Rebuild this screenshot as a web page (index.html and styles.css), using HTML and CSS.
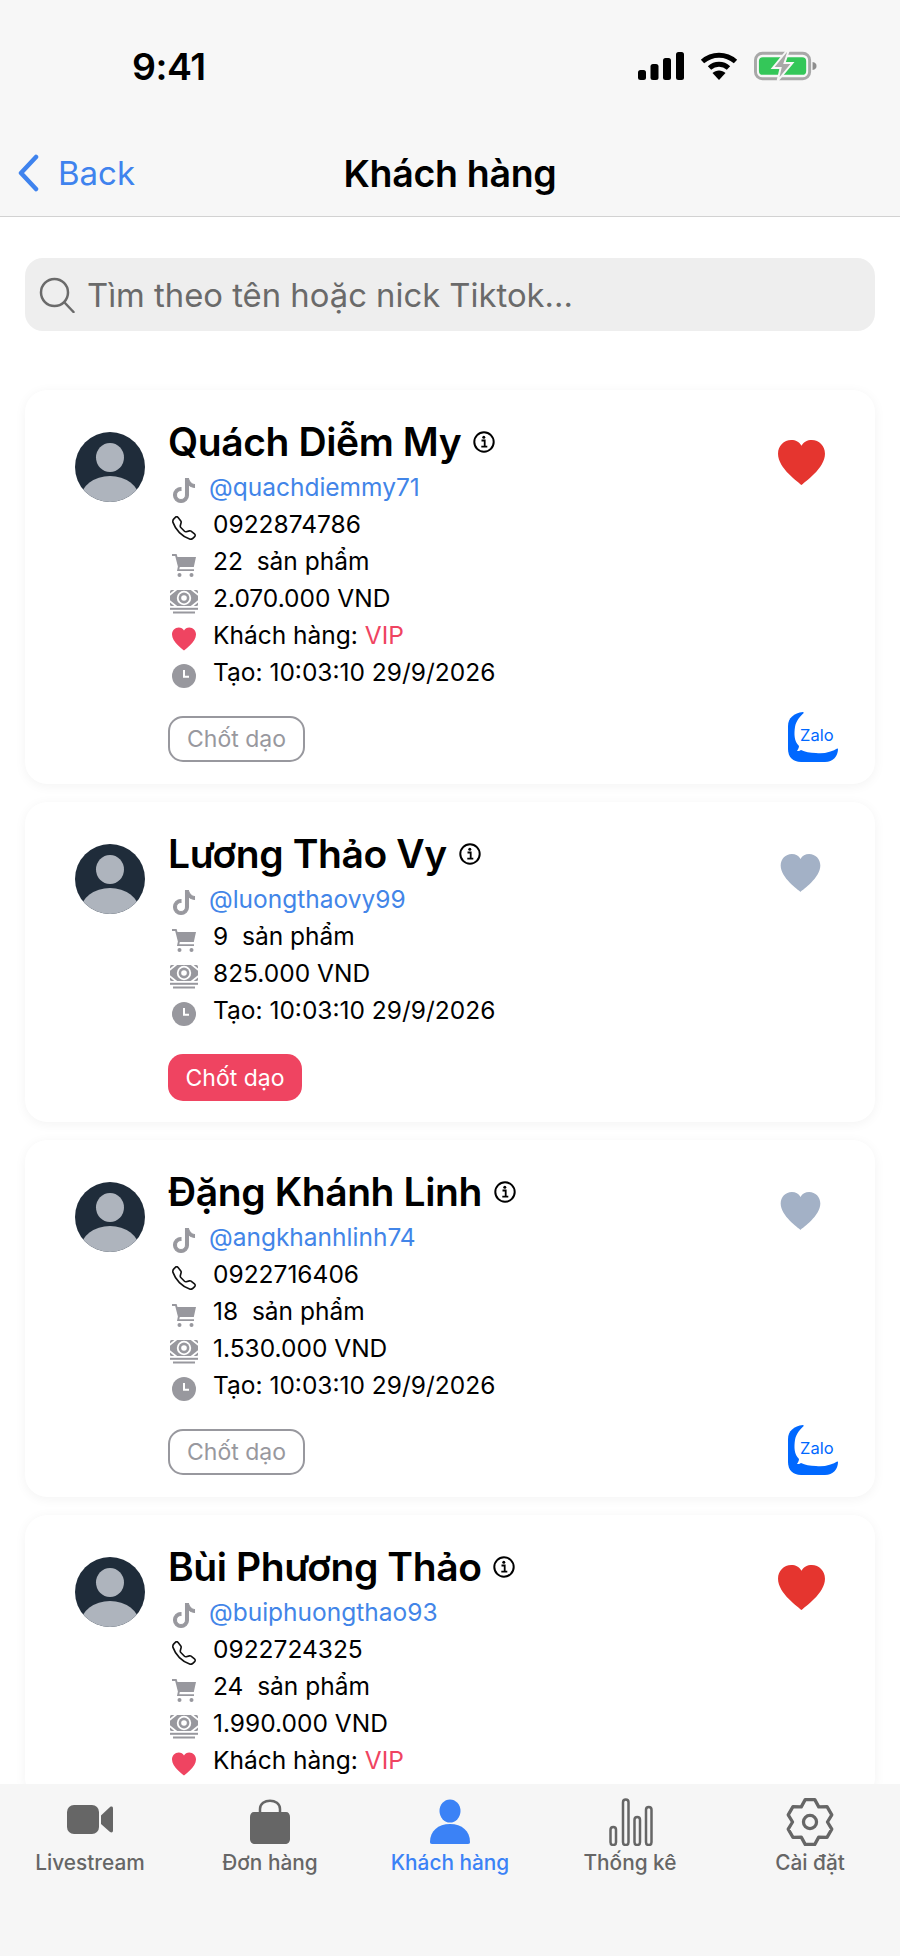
FILE: index.html
```html
<!DOCTYPE html>
<html lang="vi">
<head>
<meta charset="utf-8">
<title>Khách hàng</title>
<link rel="stylesheet" href="styles.css">
</head>
<body>
<svg class="defs" width="0" height="0" aria-hidden="true">
  <symbol id="i-tiktok" viewBox="0 0 16 16"><path fill="currentColor" stroke="currentColor" stroke-width="0.7" d="M9 0h1.980c.144.715.54 1.617 1.235 2.512C12.895 3.389 13.797 4 15 4v2c-1.753 0-3.070-.814-4-1.829V11a5 5 0 1 1-5-5v2a3 3 0 1 0 3 3V0Z"/></symbol>
  <symbol id="i-phone" viewBox="0 0 16 16"><path fill="currentColor" d="M3.654 1.328a.678.678 0 0 0-1.015-.063L1.605 2.3c-.483.484-.661 1.169-.45 1.77a17.568 17.568 0 0 0 4.168 6.608 17.569 17.569 0 0 0 6.608 4.168c.601.211 1.286.033 1.77-.45l1.034-1.034a.678.678 0 0 0-.063-1.015l-2.307-1.794a.678.678 0 0 0-.58-.122l-2.19.547a1.745 1.745 0 0 1-1.657-.459L5.482 8.062a1.745 1.745 0 0 1-.46-1.657l.548-2.19a.678.678 0 0 0-.122-.58L3.654 1.328zM1.884.511a1.745 1.745 0 0 1 2.612.163L6.29 2.98c.329.423.445.974.315 1.494l-.547 2.19a.678.678 0 0 0 .178.643l2.457 2.457a.678.678 0 0 0 .644.178l2.189-.547a1.745 1.745 0 0 1 1.494.315l2.306 1.794c.829.645.905 1.87.163 2.611l-1.034 1.034c-.74.74-1.846 1.065-2.877.702a18.634 18.634 0 0 1-7.010-4.420 18.634 18.634 0 0 1-4.420-7.009c-.362-1.030-.037-2.137.703-2.877L1.885.511z"/></symbol>
  <symbol id="i-cart" viewBox="0 0 24 24"><path fill="currentColor" d="M0 1h4.600l.9 3H24l-2.200 10H7.800l-.5 2.200H22V18H5l.9-4.600L3.200 3H0z"/><rect fill="currentColor" x="5.500" y="20" width="4" height="4" rx="2"/><rect fill="currentColor" x="17.500" y="20" width="4" height="4" rx="2"/></symbol>
  <symbol id="i-money" viewBox="0 0 28 24"><rect y="0" width="28" height="16" rx="1.500" fill="currentColor"/><path d="M-1 5.500 7 -1M-1 10.500 7 17M29 5.500 21 -1M29 10.500 21 17" fill="none" stroke="#fff" stroke-width="1.800"/><circle cx="14" cy="8" r="7.200" fill="#fff"/><circle cx="14" cy="8" r="5.400" fill="currentColor"/><circle cx="14" cy="8" r="2.800" fill="#fff"/><rect x="0" y="17.800" width="28" height="2" fill="currentColor"/><rect x="3" y="21.500" width="22" height="2" fill="currentColor"/></symbol>
  <symbol id="i-heart" viewBox="0 0 48 46"><path fill="currentColor" d="M24 46C21 43 0 29 0 14 0 6 6 0 13.500 0 18 0 22 2 24 6 26 2 30 0 34.500 0 42 0 48 6 48 14 48 29 27 43 24 46Z"/></symbol>
  <symbol id="i-clock" viewBox="0 0 24 24"><circle cx="12" cy="12" r="12" fill="currentColor"/><path d="M12 6v6.800h5" fill="none" stroke="#fff" stroke-width="2"/></symbol>
  <symbol id="i-info" viewBox="0 0 22 22"><circle cx="11" cy="11" r="9.700" fill="none" stroke="currentColor" stroke-width="2"/><circle cx="10.800" cy="6.300" r="1.500" fill="currentColor"/><path d="M8.500 9.500h3.200v6M8.300 15.700h6" fill="none" stroke="currentColor" stroke-width="1.800"/></symbol>
  <symbol id="i-avatar" viewBox="0 0 70 70"><clipPath id="av"><circle cx="35" cy="35" r="35"/></clipPath><g clip-path="url(#av)"><rect width="70" height="70" fill="#1f2c3a"/><ellipse cx="35" cy="25.500" rx="14" ry="14.500" fill="#aeb4bd"/><ellipse cx="35" cy="66" rx="29" ry="22" fill="#aeb4bd"/></g></symbol>
  <symbol id="i-zalo" viewBox="0 0 50 50"><path fill="#0068ff" d="M15 0C6 1 0 6 0 14V37C0 45 5 50 13 50H37C45 50 50 44 50 37Z"/><path fill="#fff" d="M17 0H50V36C44 40 36 42 28 41 22 41 17 40 13 38 12 39 10 39 9 39 10 37 11 36 11 34 6 29 6 22 7 15 8 9 12 4 17 0Z"/></symbol>
</svg>

<header class="top">
  <div class="status">
    <span class="time">9:41</span>
    <div class="status-icons">
      <svg class="sig" viewBox="0 0 46 28"><rect x="0" y="18" width="8" height="10" rx="2.500"/><rect x="12.500" y="12" width="8" height="16" rx="2.500"/><rect x="25" y="6" width="8" height="22" rx="2.500"/><rect x="38" y="0" width="8" height="28" rx="2.500"/></svg>
      <svg class="wifi" viewBox="0 0 38 28"><path d="M2.500 9.500C12 1 26 1 35.500 9.500" fill="none" stroke="#000" stroke-width="5"/><path d="M9.500 16C15 11 23 11 28.500 16" fill="none" stroke="#000" stroke-width="5"/><path d="M12.500 21C16 17.500 22 17.500 25.500 21L19 28Z"/></svg>
      <svg class="batt" viewBox="0 0 64 30"><rect x="1.500" y="2" width="55" height="26" rx="7" fill="none" stroke="#a8a8a8" stroke-width="3"/><rect x="5" y="6" width="48" height="18" rx="4" fill="#34c759"/><path d="M59.500 11c3 .5 4 2 4 4s-1 3.500-4 4z" fill="#8e8e8e"/><path d="M33 0 19 17h8l-3 13 15-18h-8l4-12z" fill="#a8a8a8" stroke="#f7f7f7" stroke-width="2"/></svg>
    </div>
  </div>
  <nav class="nav">
    <div class="back">
      <svg class="chev" viewBox="0 0 22 38"><path d="M19 3 4 19l15 16" fill="none" stroke="currentColor" stroke-width="4.500" stroke-linecap="round" stroke-linejoin="round"/></svg>
      <span>Back</span>
    </div>
    <h1 class="title">Khách hàng</h1>
    <div></div>
  </nav>
</header>

<main class="main">
  <div class="search">
    <svg class="search-ic" viewBox="0 0 36 36"><circle cx="15.500" cy="15.500" r="13.500" fill="none" stroke="currentColor" stroke-width="2.500"/><path d="m25.500 25.500 9 9.500" fill="none" stroke="currentColor" stroke-width="2.500" stroke-linecap="round"/></svg>
    <span>Tìm theo tên hoặc nick Tiktok...</span>
  </div>

  <section class="list">
    <article class="card">
      <svg class="avatar"><use href="#i-avatar"/></svg>
      <div class="info">
        <div class="name-line"><h2 class="name">Quách Diễm My</h2><svg class="info-ic"><use href="#i-info"/></svg></div>
        <div class="row"><svg class="ic tiktok"><use href="#i-tiktok"/></svg><span class="handle">@quachdiemmy71</span></div>
        <div class="row"><svg class="ic phone"><use href="#i-phone"/></svg><span>0922874786</span></div>
        <div class="row"><svg class="ic grey"><use href="#i-cart"/></svg><span>22&nbsp; sản phẩm</span></div>
        <div class="row"><svg class="ic grey money"><use href="#i-money"/></svg><span>2.070.000 VND</span></div>
        <div class="row"><svg class="ic pink"><use href="#i-heart"/></svg><span>Khách hàng: <b class="vip">VIP</b></span></div>
        <div class="row"><svg class="ic grey"><use href="#i-clock"/></svg><span>Tạo: 10:03:10 29/9/2026</span></div>
        <div class="btn">Chốt dạo</div>
      </div>
      <div class="side"><svg class="fav red"><use href="#i-heart"/></svg><div class="zalo"><svg class="zalo-ic"><use href="#i-zalo"/></svg><span class="zalo-text">Zalo</span></div></div>
    </article>

    <article class="card">
      <svg class="avatar"><use href="#i-avatar"/></svg>
      <div class="info">
        <div class="name-line"><h2 class="name">Lương Thảo Vy</h2><svg class="info-ic"><use href="#i-info"/></svg></div>
        <div class="row"><svg class="ic tiktok"><use href="#i-tiktok"/></svg><span class="handle">@luongthaovy99</span></div>
        <div class="row"><svg class="ic grey"><use href="#i-cart"/></svg><span>9&nbsp; sản phẩm</span></div>
        <div class="row"><svg class="ic grey money"><use href="#i-money"/></svg><span>825.000 VND</span></div>
        <div class="row"><svg class="ic grey"><use href="#i-clock"/></svg><span>Tạo: 10:03:10 29/9/2026</span></div>
        <div class="btn on">Chốt dạo</div>
      </div>
      <div class="side"><svg class="fav slate"><use href="#i-heart"/></svg></div>
    </article>

    <article class="card">
      <svg class="avatar"><use href="#i-avatar"/></svg>
      <div class="info">
        <div class="name-line"><h2 class="name">Đặng Khánh Linh</h2><svg class="info-ic"><use href="#i-info"/></svg></div>
        <div class="row"><svg class="ic tiktok"><use href="#i-tiktok"/></svg><span class="handle">@angkhanhlinh74</span></div>
        <div class="row"><svg class="ic phone"><use href="#i-phone"/></svg><span>0922716406</span></div>
        <div class="row"><svg class="ic grey"><use href="#i-cart"/></svg><span>18&nbsp; sản phẩm</span></div>
        <div class="row"><svg class="ic grey money"><use href="#i-money"/></svg><span>1.530.000 VND</span></div>
        <div class="row"><svg class="ic grey"><use href="#i-clock"/></svg><span>Tạo: 10:03:10 29/9/2026</span></div>
        <div class="btn">Chốt dạo</div>
      </div>
      <div class="side"><svg class="fav slate"><use href="#i-heart"/></svg><div class="zalo"><svg class="zalo-ic"><use href="#i-zalo"/></svg><span class="zalo-text">Zalo</span></div></div>
    </article>

    <article class="card">
      <svg class="avatar"><use href="#i-avatar"/></svg>
      <div class="info">
        <div class="name-line"><h2 class="name">Bùi Phương Thảo</h2><svg class="info-ic"><use href="#i-info"/></svg></div>
        <div class="row"><svg class="ic tiktok"><use href="#i-tiktok"/></svg><span class="handle">@buiphuongthao93</span></div>
        <div class="row"><svg class="ic phone"><use href="#i-phone"/></svg><span>0922724325</span></div>
        <div class="row"><svg class="ic grey"><use href="#i-cart"/></svg><span>24&nbsp; sản phẩm</span></div>
        <div class="row"><svg class="ic grey money"><use href="#i-money"/></svg><span>1.990.000 VND</span></div>
        <div class="row"><svg class="ic pink"><use href="#i-heart"/></svg><span>Khách hàng: <b class="vip">VIP</b></span></div>
      </div>
      <div class="side"><svg class="fav red"><use href="#i-heart"/></svg></div>
    </article>
  </section>
</main>

<footer class="tabs">
  <div class="tab">
    <svg class="tab-ic" viewBox="0 0 48 48"><rect x="1" y="7" width="32" height="29" rx="7" fill="currentColor"/><path d="M35 17.500 44 9c1.500-1 3-.5 3 1.500v22c0 2-1.500 2.500-3 1.500l-9-8z" fill="currentColor"/></svg>
    <span>Livestream</span>
  </div>
  <div class="tab">
    <svg class="tab-ic" viewBox="0 0 48 48"><path d="M14 14v-3c0-11 20-11 20 0v3" fill="none" stroke="currentColor" stroke-width="2.500"/><path d="M4 19c0-3 1.500-5 4-5h32c2.500 0 4 2 4 5v22c0 3-2 5-5 5H9c-3 0-5-2-5-5z" fill="currentColor"/></svg>
    <span>Đơn hàng</span>
  </div>
  <div class="tab active">
    <svg class="tab-ic" viewBox="0 0 48 48"><ellipse cx="24" cy="13" rx="10.500" ry="11.500" fill="currentColor"/><path d="M4 44c0-11 8-18 20-18s20 7 20 18c0 1-.5 2-2 2H6c-1.500 0-2-1-2-2z" fill="currentColor"/></svg>
    <span>Khách hàng</span>
  </div>
  <div class="tab">
    <svg class="tab-ic" viewBox="0 0 48 48"><g fill="none" stroke="currentColor" stroke-width="2.500"><rect x="4.500" y="29" width="5.500" height="18" rx="2.750"/><rect x="17" y="1.500" width="5.500" height="45.500" rx="2.750"/><rect x="28.500" y="19" width="5.500" height="28" rx="2.750"/><rect x="40" y="9" width="5.500" height="38" rx="2.750"/></g></svg>
    <span>Thống kê</span>
  </div>
  <div class="tab">
    <svg class="tab-ic" viewBox="0 0 44 44"><path d="M26.400 1.500h-8.800L14 8.140 6.400 7.950 2.030 15.500 6 22l-3.970 6.500 4.370 7.550 7.600-.19 3.600 6.640h8.800l3.600-6.640 7.600.19 4.370-7.550L38 22l3.970-6.500-4.370-7.550-7.600.19z" fill="none" stroke="currentColor" stroke-width="3" stroke-linejoin="round"/><circle cx="22" cy="22" r="6" fill="none" stroke="currentColor" stroke-width="3"/></svg>
    <span>Cài đặt</span>
  </div>
</footer>
</body>
</html>
```

FILE: styles.css
```css
* { box-sizing: border-box; }
html, body { margin: 0; padding: 0; }
body {
  width: 900px;
  height: 1956px;
  display: flex;
  flex-direction: column;
  overflow: hidden;
  background: #fff;
  color: #000;
  font-family: Inter, "Noto Sans", "Liberation Sans", sans-serif;
}
.defs { display: block; width: 0; height: 0; }

.top {
  flex: none;
  height: 217px;
  background: #f7f7f7;
  border-bottom: 1px solid #d2d2d2;
}
.status {
  height: 130px;
  padding: 47px 83px 0 132px;
  display: flex;
  justify-content: space-between;
}
.time { font-size: 37.500px; font-weight: 600; line-height: 40px; letter-spacing: -0.5px; }
.status-icons { display: flex; align-items: flex-start; gap: 16px; padding-top: 5px; }
.sig { width: 46px; height: 28px; }
.wifi { width: 38px; height: 28px; }
.batt { width: 63px; height: 30px; margin-top: -1px; }

.nav {
  height: 86px;
  display: grid;
  grid-template-columns: 1fr auto 1fr;
  align-items: center;
}
.back { display: flex; align-items: center; gap: 19px; padding-left: 17px; color: #3f83ee; font-size: 33px; }
.chev { width: 22px; height: 38px; }
.title { margin: 0; font-size: 37.500px; font-weight: 600; letter-spacing: -0.3px; }

.main { flex: 1; min-height: 0; overflow: hidden; padding: 41px 25px 0; }
.search {
  height: 73px;
  border-radius: 18px;
  background: #eeeeee;
  display: flex;
  align-items: center;
  gap: 12px;
  padding-left: 14px;
  color: #6a6a6a;
  font-size: 32.800px;
}
.search-ic { width: 36px; height: 36px; }

.list { margin-top: 59px; display: flex; flex-direction: column; gap: 18px; }
.card {
  display: flex;
  padding: 26px 37px 22px 50px;
  background: #fff;
  border-radius: 22px;
  box-shadow: 0 2px 12px rgba(0, 0, 0, 0.05);
}
.avatar { flex: none; width: 70px; height: 70px; margin: 16px 23px 0 0; }
.info { flex: 1; min-width: 0; }
.name-line { display: flex; align-items: center; gap: 12px; height: 52px; }
.name { margin: 0; font-size: 39px; font-weight: 600; letter-spacing: -0.4px; line-height: 44px; }
.info-ic { width: 22px; height: 22px; }
.row { display: flex; align-items: center; height: 37px; font-size: 24.500px; }
.ic { flex: none; width: 24px; height: 24px; margin: 8px 17px 0 4px; color: #98989e; }
.ic.tiktok { margin-right: 13px; height: 27px; }
.ic.phone { color: #111; }
.ic.pink { color: #ef4461; }
.ic.money { width: 28px; margin: 8px 15px 0 2px; }
.handle { color: #4285e8; }
.vip { color: #ef4461; font-weight: 400; }
.btn {
  display: inline-flex;
  align-items: center;
  height: 46px;
  margin-top: 26px;
  padding: 0 17px;
  border: 2px solid #98989e;
  border-radius: 15px;
  color: #98989e;
  font-size: 23px;
}
.btn.on { height: 47px; margin-bottom: -1px; padding: 0 17.500px; border: 0; background: #ef4461; color: #fff; }

.side { flex: none; width: 50px; display: flex; flex-direction: column; justify-content: space-between; align-items: flex-end; }
.fav { width: 49px; height: 45px; margin: 24px 12px 0 0; }
.fav.red { color: #e5352f; }
.fav.slate { width: 41px; height: 38px; margin: 26px 17px 0 0; color: #a3b1c6; }
.zalo { position: relative; width: 50px; height: 50px; }
.zalo-ic { display: block; width: 50px; height: 50px; }
.zalo-text { position: absolute; left: 12px; top: 13px; color: #0068ff; font-size: 16.500px; line-height: 20px; }

.tabs {
  flex: none;
  height: 172px;
  background: #f6f6f6;
  display: grid;
  grid-template-columns: repeat(5, 1fr);
  padding-top: 14px;
}
.tab { display: flex; flex-direction: column; align-items: center; color: #666; font-size: 20.800px; font-weight: 500; }
.tab.active { color: #3b82f6; }
.tab-ic { width: 48px; height: 48px; margin-bottom: 4px; }
```
